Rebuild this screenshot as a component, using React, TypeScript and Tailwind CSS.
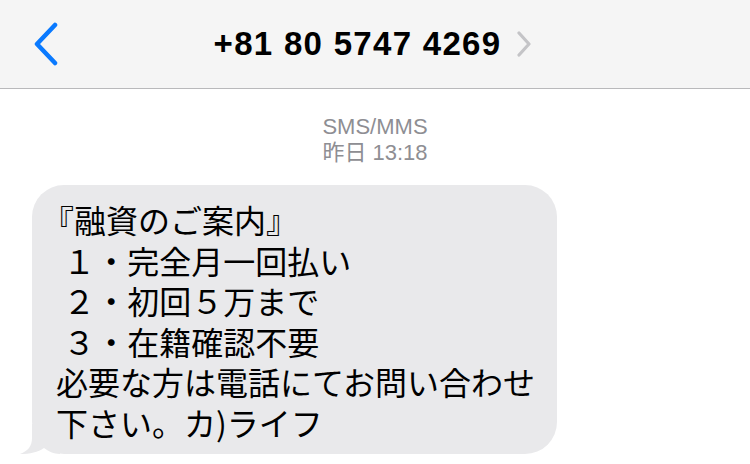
export default function App() {
    const lines = [
        "『融資のご案内』",
        " １・完全月一回払い",
        " ２・初回５万まで",
        " ３・在籍確認不要",
        "必要な方は電話にてお問い合わせ",
        "下さい。カ)ライフ",
    ];

    return (
        <div className="w-[750px] h-[464px] bg-white overflow-hidden font-['Liberation_Sans','Noto_Sans_CJK_JP',sans-serif]">
            {/* nav bar */}
            <header className="relative h-[89px] bg-[#f5f5f5] border-b border-[#b9b9bb] flex items-center justify-center">
                <svg className="absolute left-[32px] top-[22px]" width="28" height="44" viewBox="0 0 28 44">
                    <path d="M23 3 L5 22 L23 41" fill="none" stroke="#0a7aff" strokeWidth="4.5" strokeLinecap="round" strokeLinejoin="round" />
                </svg>
                <div className="flex items-center gap-[15px] pr-[4px]">
                    <span className="text-[33px] font-bold text-black tracking-[1.3px]">+81 80 5747 4269</span>
                    <svg width="16" height="26" viewBox="0 0 16 26">
                        <path d="M3 2 L13 13 L3 24" fill="none" stroke="#c4c4c7" strokeWidth="3.2" strokeLinecap="round" strokeLinejoin="round" />
                    </svg>
                </div>
            </header>

            {/* timestamp */}
            <div className="mt-[25px] flex flex-col items-center text-[#8e8e93] text-[22px] leading-[26px]">
                <span>SMS/MMS</span>
                <span>昨日 13:18</span>
            </div>

            {/* message bubble */}
            <div className="relative mt-[19px] ml-[32px] w-[525px]">
                <div className="bg-[#e9e9eb] rounded-[32px] pl-[24px] pr-[16px] pt-[14px] pb-[12px] text-black text-[32px] leading-[40.5px] whitespace-pre font-['Noto_Sans_CJK_JP',sans-serif]">
                    {lines.map((line, i) => (
                        <div key={i} className={i === 0 ? "-ml-[14px]" : ""}>
                            {line}
                        </div>
                    ))}
                </div>
                <svg className="absolute left-[-12px] bottom-0" width="40" height="30" viewBox="0 0 40 30">
                    <path d="M12 0 L12 14 C12 22 8 27 0 30 C10 30 18 28 24 24 C28 27 34 30 40 30 L40 0 Z" fill="#e9e9eb" />
                </svg>
            </div>
        </div>
    );
}
